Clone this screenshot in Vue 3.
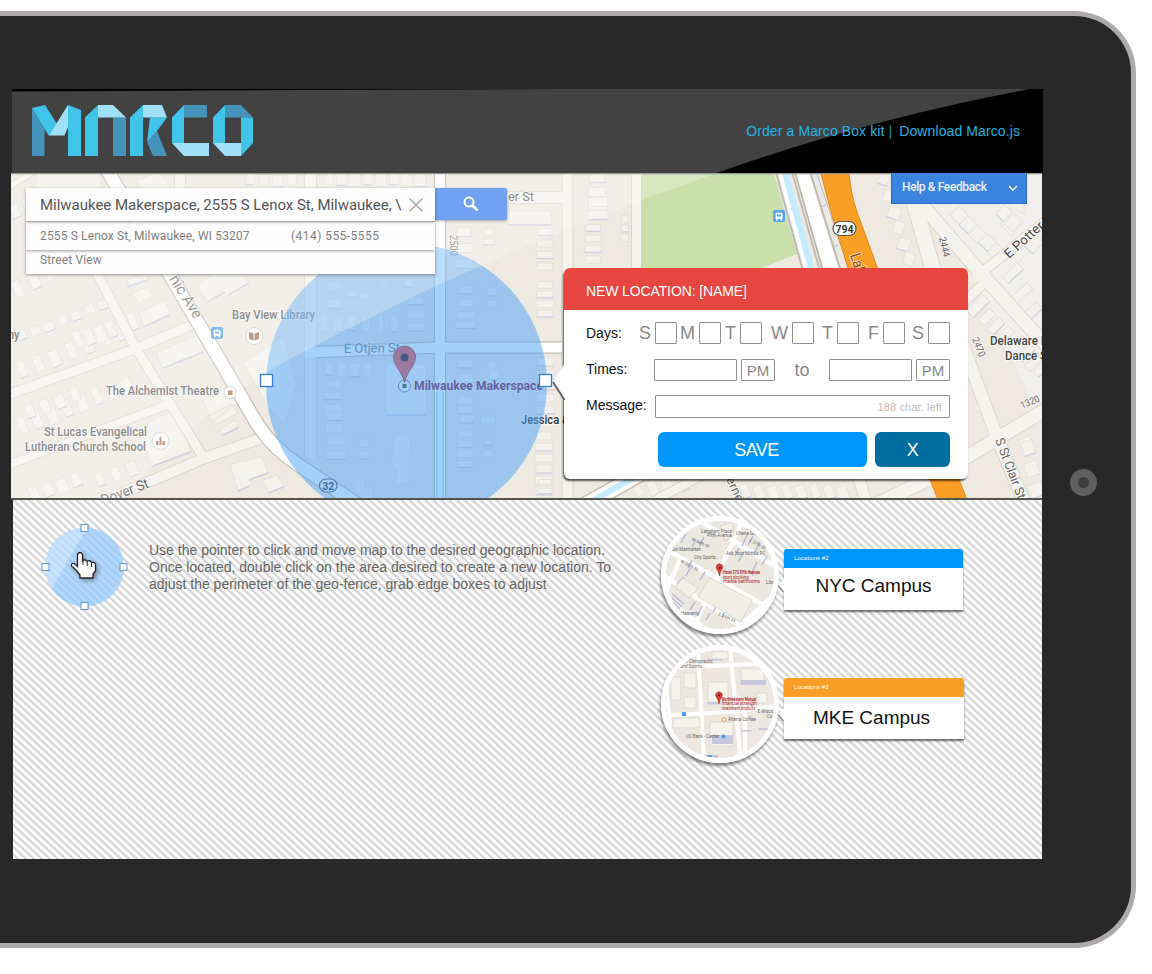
<script setup>
const days = ['S', 'M', 'T', 'W', 'T', 'F', 'S']

const help = ['Use the pointer to click and move map to the desired geographic location.',
  'Once located, double click on the area desired to create a new location. To',
  'adjust the perimeter of the geo-fence, grab edge boxes to adjust']

// rows of houses: x, y, step x, step y, count, width, height, rotation
const rows = [
  [22, 370, 16.5, -6.4, 7, 9, 17, -22], [78, 340, 11, -3.5, 6, 9, 17, -22],
  [22, 336, 13.5, -5.2, 7, 10, 9, -22], [22, 426, 15, -5.8, 8, 9, 17, -22],
  [30, 412, 15, -5.8, 4, 9, 14, -22], [34, 494, 14, -4.6, 4, 10, 14, -22],
  [100, 480, 16, -6, 3, 9, 14, -22], [18, 290, 16, -10, 3, 10, 18, -25],
  [15, 212, 13, -8, 2, 10, 14, -25],
  [329, 179, 13, 0, 8, 10, 13, 0], [250, 180, 14, 0, 4, 9, 11, 0],
  [324, 324, 14, 0, 2, 9, 15, 0], [352, 324, 14, 0, 2, 9, 15, 0], [381, 324, 13, -1, 2, 7, 18, 0],
  [416, 301, 0, 13, 3, 17, 8, 0], [334, 286, 0, 18, 2, 17, 9, 0],
  [352, 295, 13, 1, 2, 12, 7, 0], [384, 283, 25, 0, 2, 9, 9, 0],
  [329, 369, 13, 0, 4, 9, 14, 0], [333, 384, 0, 12, 3, 17, 7, 0],
  [334, 416, 0, 12, 3, 17, 9, 0], [336, 440, 0, 15, 2, 20, 9, 0],
  [464, 232, 0, 16, 3, 16, 9, 0], [489, 232, 0, 10, 2, 12, 6, 0],
  [466, 290, 0, 13, 2, 16, 8, 0], [466, 315, 0, 10, 2, 20, 7, 0],
  [545, 232, 0, 11.5, 4, 16, 7, 0], [545, 285, 0, 9.5, 4, 17, 7, 0],
  [545, 362, 0, 12, 5, 18, 8, 0], [544, 436, 0, 11, 6, 17, 8, 0],
  [465, 364, 0, 14, 2, 16, 8, 0], [465, 400, 0, 10, 2, 16, 8, 0],
  [467, 420, 21, 0, 2, 15, 8, 0], [465, 434, 0, 10, 4, 16, 7, 0],
  [488, 443, 0, 10, 2, 9, 6, 0], [364, 443, 0, 12, 2, 11, 8, 0],
  [492, 292, 0, 12, 2, 10, 8, 0], [492, 367, 2, 8, 2, 9, 10, 0],
  [597, 178, 0, 14, 3, 17, 9, 0], [598, 202, 0, 13, 2, 20, 9, 0], [593, 228, 0, 10.5, 4, 16, 7, 0],
  [625, 219, 0, 9.5, 3, 7, 7, 0],
  [884, 180, 5, 16, 8, 11, 12, 17],
  [959, 216, 9.5, 9, 5, 14, 13, 43], [1004, 214, 9, 9, 2, 12, 13, 43],
  [1020, 254, 14, -10, 2, 12, 16, 43], [978, 306, 0, 0, 1, 24, 10, -45],
  [987, 318, 9, 8, 3, 17, 9, -45], [1013, 274, 9, 19, 3, 22, 9, -43],
  [1018, 345, 8, 8, 4, 18, 8, -43], [1028, 449, 4, 20, 3, 13, 14, -20],
  [638, 490, 15, -2, 4, 9, 15, -25], [745, 492, 14, 0, 8, 9, 14, -22], [545, 482, 0, 9, 3, 14, 5, 0]
]

const houses = rows.flatMap(([x, y, dx, dy, n, w, h, r], k) =>
  Array.from({ length: n }, (_, i) => {
    const v = ((i * 7 + k * 5) % 5) - 2
    return { x: x + dx * i, y: y + dy * i + (dx ? v * 0.5 : 0), w: w + v * 0.6, h, r, shade: (i + k) % 2 === 0 }
  })
)

const roads = [
  ['M75 236L99 277L135 347L205 460', 9], ['M5 396L135 349L199 322', 9],
  ['M5 466L172 403', 8], ['M85 509L205 458L270 435', 10], ['M5 190Q20 180 40 168', 5],
  ['M180 165V190', 10], ['M310.500 165V458', 11], ['M567.500 165V505', 10],
  ['M446 197.500H567', 11], ['M636.500 165V275', 9],
  ['M912 195L936 280', 15], ['M918 200L985 278L1050 350', 13], ['M975 278L1048 219', 9],
  ['M955 310L990 278', 9],
  ['M950 310L998 440L1028 510', 12], ['M955 464L1000 437L1050 407', 13],
  ['M860 512L940 474', 13], ['M858 474L868 510', 11], ['M655 500L705 474', 8]
]

const labels = [
  { t: 'nic Ave', x: 169, y: 279, w: 48, r: 58, s: 15, c: '#777' },
  { t: 'Dover St', x: 103, y: 505, w: 50, r: -21, s: 14, c: '#666' },
  { t: 'E Otjen St', x: 344, y: 353, w: 56, r: -1, s: 13, c: '#777' },
  { t: 'er St', x: 508, y: 201, w: 26, r: 0, s: 13, c: '#666' },
  { t: '2500', x: 450, y: 235, w: 21, r: 90, s: 10, c: '#777' },
  { t: '2444', x: 939, y: 238, w: 20, r: 77, s: 10, c: '#555' },
  { t: '2470', x: 972, y: 339, w: 20, r: 68, s: 10, c: '#666' },
  { t: '1320', x: 1022, y: 409, w: 20, r: -23, s: 10, c: '#666' },
  { t: 'E Potter A', x: 1009, y: 259, w: 60, r: -42, s: 13, c: '#444' },
  { t: 'S St Clair St', x: 995, y: 440, w: 64, r: 69, s: 13, c: '#666' },
  { t: 'erne', x: 726, y: 479, w: 26, r: 65, s: 12, c: '#666' },
  { t: 'Lake', x: 850, y: 255, w: 28, r: 73, s: 15, c: '#8a4b10' },
  { t: 'Bay View Library', x: 232, y: 319, w: 83, r: 0, s: 12, c: '#666', b: 1 },
  { t: 'The Alchemist Theatre', x: 106, y: 395, w: 113, r: 0, s: 12, c: '#666', b: 1 },
  { t: 'St Lucas Evangelical', x: 44, y: 435.5, w: 103, r: 0, s: 12, c: '#666', b: 1 },
  { t: 'Lutheran Church School', x: 25, y: 450.5, w: 121, r: 0, s: 12, c: '#666', b: 1 },
  { t: 'ny', x: 8, y: 339, w: 11.500, r: 0, s: 12, c: '#555', b: 1 },
  { t: 'Jessica &', x: 521, y: 424, w: 48, r: 0, s: 12, c: '#333', b: 1 },
  { t: 'Delaware H', x: 990, y: 345, w: 59, r: 0, s: 12, c: '#444', b: 1 },
  { t: 'Dance S', x: 1005, y: 360, w: 42, r: 0, s: 12, c: '#444', b: 1 }
]

const campuses = [
  { id: 'nyc', name: 'NYC Campus', tag: 'Locations #2' },
  { id: 'mke', name: 'MKE Campus', tag: 'Locations #2' }
]
</script>

<template>
  <div class="stage">
    <div class="tablet">
      <div class="screen">
        <header class="top">
          <svg class="glare" viewBox="12 89 1031 84" width="1031" height="84">
            <path d="M12 91.500L300 90L560 89H1030Q865 120 717 173H12Z" fill="#424242" />
          </svg>
          <svg class="logo" viewBox="0 0 221 51" width="221" height="51">
            <g fill="#4593bb">
              <path d="M0 3L12.500 24V51H0ZM81 12.500H94V51H81ZM125 26L135 51H121L115 37ZM152 0H175V12.500H152ZM193 0H209L221 12.500H193Z" />
            </g>
            <g fill="#41c4ea">
              <path d="M0 3L13 0L25 19L17 31L12.500 24ZM36 0L49 5V51H36ZM53 12.500L66 0V51H53ZM98 12.500L111 0V51H98ZM118 12.500H135L125 26L115 37ZM140 12.500L152 0V38H140ZM181 12.500L193 0V38H181ZM209 12.500H221V38L209 51Z" />
            </g>
            <g fill="#a0e0fa">
              <path d="M36 0V22L32.500 30.500H17ZM66 0H81L94 12.500H66ZM111 0H130L135 12.500H111ZM140 38H177V51H152ZM181 38H209V51H193Z" />
            </g>
          </svg>
          <nav class="links"><a>Order a Marco Box kit</a><span class="bar">|</span><a>Download Marco.js</a></nav>
        </header>

        <section class="map">
          <svg class="canvas" viewBox="11 173 1031 327" width="1031" height="327">
            <rect x="11" y="173" width="1031" height="327" fill="#eee9e1" />
            <path d="M1042 173V420L968 268L905 173Z" fill="#f2f0ec" />
            <g fill="#f4f2ec" stroke="#e5e2db" stroke-width="1">
              <path d="M37 173H99L102 188H34ZM137 180L160 172L172 190H140Z" />
              <path d="M197 285L228 262L249 283L228 296L221 290L208 302ZM139 313L165 300L170 314L144 326ZM131 294L147 287L153 296L139 303ZM127 280L148 273V280L130 287Z" />
              <path d="M156 353L198 335L204 351L163 368ZM243 363L283 337L297 384L292 401L285 424L270 410ZM138 428L175 409L191 451L152 466Z" />
              <path d="M203 400L230 386L238 402L212 422ZM209 416L232 404L238 413L214 425ZM220 430L235 420L238 427L224 435Z" />
              <path d="M230 464L262 457L268 473L249 480L252 485L238 491ZM263 480L277 475L285 486L269 493Z" />
              <path d="M386 364H426V415H386ZM394 438L402 433L410 437L409 483L396 485V470L391 462ZM355 479H365V488H373V500H355Z" />
              <path d="M508 211H551V225H508ZM1000 214L1007 206L1024 222L1011 236L1002 226ZM978 185L984 178L1024 202V214Z" />
              <path d="M973 407L983 398L991 404L980 413ZM1018 441L1029 436L1037 446L1024 453Z" />
            </g>
            <g stroke="#cfcfe2" stroke-width="1.400" fill="none">
              <path d="M208 302L225 292M228 295L249 283M144 327L170 315M163 368L204 352M127 287L148 280M153 466L191 452M249 480L268 473M269 493L285 486M223 435L238 428M508 225H551M386 415H426M238 491L249 486" />
            </g>
            <g v-for="(h, i) in houses" :key="i" :transform="`translate(${h.x} ${h.y}) rotate(${h.r})`">
              <rect :x="-h.w / 2" :y="-h.h / 2" :width="h.w" :height="h.h" fill="#f4f2ed" stroke="#e5e2dd" stroke-width="1" />
              <path v-if="h.shade" :d="`M${-h.w / 2} ${h.h / 2}H${h.w / 2}`" stroke="#cfcfe2" stroke-width="1.300" />
            </g>
            <g fill="none" stroke="#ddd8cc">
              <path v-for="r in roads" :key="r[0]" :d="r[0]" :stroke-width="r[1] + 2" />
            </g>
            <g fill="none" stroke="#f5f3ee">
              <path v-for="r in roads" :key="r[0]" :d="r[0]" :stroke-width="r[1]" />
            </g>
            <path class="case" d="M104 165L170 275L256 422Q272 448 300 466L360 506" stroke-width="15" />
            <path class="case" d="M316 352L440 347.500H562" stroke-width="12.500" />
            <path class="case" d="M440 165V505" stroke-width="12.500" />
            <path class="main" d="M104 165L170 275L256 422Q272 448 300 466L360 506" stroke-width="12.500" />
            <path class="main" d="M305 352.500L440 347.500H562" stroke-width="10" />
            <path class="main" d="M440 165V505" stroke-width="10" />
            <path class="water" d="M437 392V500M443 392V500" stroke-width="2" />

            <path d="M641 173H774L797 254L762 268V275H641Z" fill="#cae0ab" />
            <path d="M774 165L804 275H864L834 165Z" fill="#ece9e4" />
            <path d="M781 165L812 278" stroke="#fff" stroke-width="10" />
            <path class="water" d="M783 165L814 278" stroke-width="6.500" />
            <path d="M799 165L834 278" stroke="#fff" stroke-width="14" />
            <path d="M774 165L804 275M790 165L822 278M793 165L825 278M808 165L843 278" fill="none" stroke="#bdb8ad" stroke-width="1.800" />
            <path d="M814 165L852 278M818 165L846 252M821 207L826 205M833 247L838 245" fill="none" stroke="#bbb" stroke-width="1" />
            <path d="M821 173H849Q851 195 857 212L880 275L967 500H938L848 268Q831 215 821 173Z" fill="#fb9e25" stroke="#e08a17" stroke-width="1" />
            <path d="M578 509L640 474" stroke="#c5c1b5" stroke-width="17" /><path d="M578 509L640 474" stroke="#fff" stroke-width="14" />
            <path class="water" d="M578 509L640 474" stroke-width="6" />

            <g v-for="l in labels" :key="l.t" :transform="`translate(${l.x} ${l.y}) rotate(${l.r})`">
              <text class="label" :class="{ poi: l.b }" :font-size="l.s" :fill="l.c" :textLength="l.w" lengthAdjust="spacingAndGlyphs">{{ l.t }}</text>
            </g>
            <rect x="833" y="221.500" width="23" height="14" rx="7" fill="#fff" stroke="#555" stroke-width="1.200" />
            <text class="shield" x="844.500" y="232.500">794</text>
            <g fill="#fff" stroke="#d2cdc5"><circle cx="254" cy="336" r="8.500" /><circle cx="230" cy="392.500" r="6" /><circle cx="160.500" cy="441" r="8.500" /></g>
            <g fill="#ad7c5e">
              <path d="M249 332L253.500 333.500V340.500L249 339ZM259 332L254.500 333.500V340.500L259 339ZM228 390.500H232.500V395H228ZM156 441H158.500V445H156ZM159.500 438L160.500 436L161.500 438V445H159.500ZM162.500 441H165V445H162.500Z" />
            </g>
            <g v-for="p in [[211, 327], [773, 210]]" :key="p[0]" :transform="`translate(${p[0]} ${p[1]})`">
              <rect width="12" height="12" rx="2" fill="#5aa5ef" />
              <path d="M2.500 3.500Q6 1.500 9.500 3.500V9H2.500ZM3 9H4.500V10.500H3ZM7.500 9H9V10.500H7.500Z" fill="#fff" /><path d="M4 4.500H8V6.500H4Z" fill="#5aa5ef" />
            </g>
            <circle cx="404.500" cy="386" r="6" fill="#fff" stroke="#777" /><path d="M402.500 384H406.500V388H402.500Z" fill="#553" />
            <text class="place" x="414" y="390" textLength="129" lengthAdjust="spacingAndGlyphs">Milwaukee Makerspace</text>
            <path d="M404.500 383C403 372 393.500 366 393.500 357A11 11 0 0 1 415.500 357C415.500 366 406 372 404.500 383Z" fill="#ed5048" stroke="#b23a40" />
            <circle cx="404.500" cy="357.500" r="4" fill="#3c1016" />
            <rect x="319.500" y="479" width="17.500" height="13" rx="6.500" fill="#fff" stroke="#555" stroke-width="1.200" />
            <text class="shield" x="328.300" y="489.500">32</text>
            <circle cx="406.500" cy="384" r="140.500" fill="rgba(73,161,250,.5)" />
            <path d="M11 173H717Q480 255 275 367Q140 450 11 640Z" fill="#fff" opacity=".25" />
            <path d="M11 173.500H1042" stroke="#9b9894" stroke-width="1.500" />
            <path d="M11 499H1042" stroke="#55534f" stroke-width="2" />
            <g fill="#fff" stroke="#347dcb" stroke-width="1.300"><rect x="260.500" y="374.500" width="12" height="12" /><rect x="539.500" y="374.500" width="12" height="12" /></g>
          </svg>

          <div class="search">
            <div class="query">
              <span class="place-name">Milwaukee Makerspace, 2555 S Lenox St, Milwaukee, \</span>
              <svg class="clear" width="16" height="16" viewBox="0 0 16 16"><path d="M1.500 1.500L14.500 14.500M14.500 1.500L1.500 14.500" stroke="#aaa" stroke-width="1.500" /></svg>
            </div>
            <div class="detail"><span class="address">2555 S Lenox St, Milwaukee, WI 53207</span><span class="phone">(414) 555-5555</span></div>
            <div class="street">Street View</div>
          </div>
          <button class="go" aria-label="Search">
            <svg width="16" height="16" viewBox="0 0 16 16" fill="none" stroke="#fff"><circle cx="6" cy="6" r="4.500" stroke-width="2" /><path d="M9.500 9.500L14.500 14.500" stroke-width="2.500" /></svg>
          </button>
          <div class="feedback">
            <span>Help &amp; Feedback</span>
            <svg width="10" height="7" viewBox="0 0 10 7"><path d="M1 1L5 5L9 1" fill="none" stroke="#fff" stroke-width="1.600" /></svg>
          </div>

          <div class="popup">
            <svg class="arrow" width="15" height="42" viewBox="0 0 15 42"><path d="M15 1L3 20L15 40" fill="#fff" /><path d="M3 20L14.500 38" stroke="#666" stroke-width="2" /></svg>
            <h2>NEW LOCATION: [NAME]</h2>
            <form class="form">
              <div class="line"><label>Days:</label>
                <div class="days"><span v-for="(d, i) in days" :key="i" class="day">{{ d }}<i class="tick"></i></span></div>
              </div>
              <div class="line times"><label>Times:</label>
                <i class="time"></i><span class="pm">PM</span><span class="to">to</span><i class="time"></i><span class="pm">PM</span>
              </div>
              <div class="line message"><label>Message:</label><div class="msg">188 char. left</div></div>
              <div class="line actions"><span class="save">SAVE</span><span class="close">X</span></div>
            </form>
          </div>
        </section>

        <section class="lower">
          <div class="howto">
            <svg class="pointer" width="87" height="87" viewBox="41 523 87 87">
              <circle cx="84.500" cy="567" r="39.500" fill="#8cc5ff" opacity=".68" />
              <path d="M88 527.700Q70 555 52 589A39.500 39.500 0 0 1 88 527.700Z" fill="#fff" opacity=".3" />
              <g fill="#fff" stroke="#5f93d6" stroke-width="1"><rect x="81" y="524.500" width="7" height="7" /><rect x="42" y="563.500" width="7" height="7" /><rect x="120" y="563.500" width="7" height="7" /><rect x="81" y="602.500" width="7" height="7" /></g>
              <path class="hand" d="M77.500 554Q80 551 82.500 554V561Q85 558.500 87 561.500Q90 559.500 91.500 562.500Q95 561.500 95.500 564.500V571L93 574V578H80V575L76.500 570.500L71.500 566Q71 562.500 74.500 563.500L77.500 566.500Z" />
              <path d="M83 561V565M87.300 562V566M91.500 563V567" stroke="#333" stroke-width="1" />
            </svg>
            <p><span v-for="h in help" :key="h">{{ h }}</span></p>
          </div>
          <div class="campuses">
            <article v-for="c in campuses" :key="c.id" class="campus" :class="c.id">
              <div class="disc">
                <svg v-if="c.id === 'nyc'" width="108" height="108" viewBox="666 521 108 108">
                  <rect x="666" y="521" width="108" height="108" fill="#ebe8df" />
                  <path d="M660 546L790 620M690 515L790 575M655 570L770 645M690 635L745 515M655 615L680 560M725 640L790 580M655 590L720 640" stroke="#fff" stroke-width="4.500" />
                  <g stroke="#b9b9d8" stroke-width="1.500"><path d="M681 543L687 531M692 547L696 540M704 537L699 547M742 546L747 535M755 552L760 542M738 562L744 552M752 572L757 562M688 568L692 560M700 580L705 572M677 584L684 577M672 594L684 604M690 610L695 602M706 620L710 613M722 617L726 607M748 570L753 575M762 565L767 556M727 540L733 531M672 598L682 607M673 602L680 609M697 616L702 606M713 612L718 603M735 556L739 548M748 545L753 536M686 576L690 568" /></g>
                  <g fill="#f2f0e6" stroke="#d3d0c3" stroke-width=".8"><path d="M710 578L752 600L741 622L698 597ZM720 526L732 522L734 535L725 541ZM683 578L698 588L689 598L675 587Z" /></g>
                  <g class="tiny"><text x="701" y="533">Langham Place</text><text x="707" y="537">Fifth Avenue</text><text x="736" y="535">Cherie Grove</text><text x="672" y="551">Sin Manhattan</text><text x="694" y="559">City Sports</text><text x="726" y="555">Ask Your Middle PC</text><text x="766" y="584">Libro</text><text x="681" y="615">Heavenly</text>
                    <text transform="translate(691 540) rotate(25)">W 38th St</text><text transform="translate(680 562) rotate(28)">W 36th St</text><text transform="translate(749 541) rotate(30)">E 37th St</text><text transform="translate(718 615) rotate(25)">E 34th St</text></g>
                  <g class="hot"><text class="strong" x="723" y="574" textLength="37" lengthAdjust="spacingAndGlyphs">Hotel 373 Fifth Avenue</text><text x="723" y="578.500">spot docking</text><text x="723" y="583">marble bathrooms</text></g>
                  <path d="M719.500 576Q719 572 716.800 569A3.300 3.300 0 1 1 722.200 569Q720 572 719.500 576Z" fill="#e53935" stroke="#a32323" stroke-width=".5" /><circle cx="719.500" cy="567.500" r="1.100" fill="#411" />
                </svg>
                <svg v-else width="108" height="108" viewBox="666 652 108 108">
                  <rect x="666" y="652" width="108" height="108" fill="#ece8e0" />
                  <path d="M698 650L704 765M730 650L741 765M664 718L740 713L777 708M664 670L777 665M666 687L674 765M745 700V765" stroke="#fff" stroke-width="4" fill="none" />
                  <g fill="#f5f3ec" stroke="#dddacf"><path d="M671 679H681V702H671ZM684 675H696V690H684ZM684 699H696V710H684ZM708 684H728V704H708ZM712 654H728V661H712ZM741 671H764V686H741ZM673 720H700V730H673ZM710 724H733V748H710ZM757 695H767V705H757Z" /></g>
                  <g fill="#c8c7dd"><path d="M741 682H766V687H741ZM707 704H721V706.500H707ZM712 737H733V746H712ZM710 661H722V662.500H710ZM705 757H718V760H705ZM741 732H752V733.500H741ZM759 730H768V732H759Z" /></g>
                  <g class="tiny"><text x="682" y="665">On Chiropractic</text><text x="680" y="669.500">and Sports...</text><text x="728" y="723">Alterra Coffee</text><text x="686" y="740">US Bank - Center</text><text x="757.500" y="714.500">E Wiscon</text><text x="767" y="720">Court</text></g>
                  <g class="hot"><text class="strong" x="722" y="702.500" textLength="34" lengthAdjust="spacingAndGlyphs">Northwestern Mutual</text><text x="722" y="707">financial strength</text><text x="722" y="711.500" textLength="33" lengthAdjust="spacingAndGlyphs">investment products</text></g>
                  <g fill="#4c9be9"><path d="M682 714H686V718H682ZM707 757H712V761H707Z" /><circle cx="723.500" cy="738.500" r="2" /></g><circle cx="724" cy="721.500" r="2" fill="#fff" stroke="#ee8b3f" />
                  <path d="M719 706Q718.500 702 716.300 699A3.300 3.300 0 1 1 721.700 699Q719.500 702 719 706Z" fill="#e53935" stroke="#a32323" stroke-width=".5" /><circle cx="719" cy="697.300" r="1.100" fill="#411" />
                </svg>
              </div>
              <div class="card">
                <svg class="nib" width="7" height="16" viewBox="0 0 7 16"><path d="M7 0L1 6L7 13Z" fill="#fff" /><path d="M1 6.500L6.500 13" stroke="#888" stroke-width="1.500" /></svg>
                <div class="tag">{{ c.tag }}</div>
                <div class="name">{{ c.name }}</div>
              </div>
            </article>
          </div>
        </section>
      </div>
      <div class="home"></div>
    </div>
  </div>
</template>

<style>
body { background: #fff; overflow: hidden; }
</style>

<style scoped>
.stage { width: 1152px; height: 974px; box-sizing: border-box; padding-top: 11px; overflow: hidden; font-family: "Liberation Sans", Arial, sans-serif; }
.tablet { width: 1136px; height: 937px; box-sizing: border-box; border: 5px solid #adaaa9; border-left: 0; border-radius: 0 62px 62px 0; background: #282828; display: flex; align-items: flex-start; }
.screen { width: 1032px; margin: 73px 0 0 11px; }
.home { box-sizing: border-box; width: 27px; height: 27px; border: 8px solid #606060; border-radius: 50%; background: #3c3c3c; margin: 453px 0 0 27px; }

.top { position: relative; height: 84px; margin-left: 1px; background: #000; display: flex; justify-content: space-between; align-items: flex-start; }
.glare { position: absolute; left: 0; top: 0; }
.logo { position: relative; margin: 16px 0 0 20px; }
.links { position: relative; display: flex; margin: 34px 23px 0 0; font-size: 14px; line-height: 17px; letter-spacing: .1px; color: #22b4e2; white-space: nowrap; }
.bar { margin: 0 7px 0 4px; color: #1795b8; }

.map { position: relative; width: 1031px; height: 327px; }
.canvas { display: block; }
.canvas .case { fill: none; stroke: #c4bfb1; }
.canvas .main { fill: none; stroke: #fff; }
.canvas .water { fill: none; stroke: #c3ebfd; }
.label { font-family: Roboto, sans-serif; paint-order: stroke; stroke: rgba(255,255,255,.6); stroke-width: 2px; }
.poi { font-weight: 500; }
.shield { font-family: Roboto, sans-serif; font-weight: 700; font-size: 10.5px; text-anchor: middle; fill: #333; }
.place { font-family: Roboto, sans-serif; font-weight: 700; font-size: 13px; fill: #801b3e; paint-order: stroke; stroke: rgba(255,255,255,.35); stroke-width: 2px; }

.search { position: absolute; left: 15px; top: 15px; width: 409px; font-family: Roboto, sans-serif; color: #808080; }
.search > div { box-sizing: border-box; background: #fefefe; box-shadow: 0 1px 3px rgba(0,0,0,.4); }
.query { position: relative; z-index: 2; height: 33px; display: flex; align-items: center; justify-content: space-between; padding: 0 11px 0 14px; }
.place-name { font-size: 15px; letter-spacing: -.02px; color: #555; white-space: nowrap; }
.detail { position: relative; z-index: 1; height: 28px; margin-top: 1px; padding: 0 0 1px 14px; display: flex; align-items: center; font-size: 12px; white-space: nowrap; }
.address { width: 251px; letter-spacing: .14px; }
.phone { letter-spacing: .45px; }
.street { height: 24px; padding: 3px 0 0 14px; font-size: 12px; line-height: 15px; letter-spacing: .12px; }
.go { position: absolute; left: 423px; top: 15px; width: 73px; height: 32px; border: 0; border-left: 1px solid #5782d6; border-radius: 0 2px 2px 0; background: #71a1f3; display: flex; align-items: center; justify-content: center; box-shadow: 0 1px 3px rgba(0,0,0,.35); }
.feedback { position: absolute; left: 880px; top: 0; width: 136px; height: 31px; box-sizing: border-box; border: 1px solid #2b69c4; border-top: 0; background: #3a84e0; color: #e8f0fb; font: 500 12px/28px Roboto, sans-serif; letter-spacing: -.38px; display: flex; justify-content: space-between; padding: 0 8px 0 10px; white-space: nowrap; }
.feedback svg { margin-top: 12px; }

.popup { position: absolute; left: 553px; top: 95px; width: 404px; height: 211px; background: #fff; border-radius: 6px; box-shadow: -1px 2px 2px rgba(0,0,0,.65); }
.arrow { position: absolute; left: -14px; top: 94px; }
.popup h2 { margin: 0; height: 42px; background: #e7453f; border-radius: 6px 6px 0 0; padding-left: 22px; font-weight: 400; font-size: 14px; line-height: 46px; letter-spacing: -.12px; color: #fff; }
.form { padding: 12px 18px 0 22px; }
.line { display: flex; }
label { font-size: 14px; line-height: 22px; letter-spacing: 0; color: #111; }
.days { margin-left: auto; display: grid; grid-template-columns: 42px 44px 41px 52px 45px 46px 45px; }
.day { display: flex; justify-content: flex-end; gap: 4px; font-size: 18px; line-height: 23px; color: #888; }
.tick, .time, .pm, .msg { box-sizing: border-box; border: 1px solid #909090; border-radius: 1px; }
.tick { width: 22px; height: 22px; }
.times { margin-top: 14px; height: 22px; justify-content: flex-end; }
.times label { margin-right: auto; line-height: 20px; }
.time { width: 83px; }
.pm { width: 34px; margin-left: 4px; font-size: 15px; line-height: 22px; text-align: center; color: #888; }
.to { width: 54px; text-align: center; font-size: 18px; line-height: 23px; color: #888; }
.message { margin-top: 14px; height: 23px; }
.message label { width: 69px; line-height: 20px; }
.msg { flex: 1; text-align: right; padding-right: 7px; font-size: 11px; line-height: 22px; color: #bcbcbc; letter-spacing: .1px; }
.actions { margin-top: 14px; justify-content: flex-end; gap: 8px; }
.actions span { height: 35px; line-height: 37px; border-radius: 6px; text-align: center; color: #fff; font-size: 18px; letter-spacing: -.6px; }
.save { width: 209px; background: #0096fc; padding-right: 12px; box-sizing: border-box; }
.close { width: 75px; background: #006da1; }

.lower { margin-left: 2px; width: 1029px; height: 359px; display: flex; justify-content: space-between; background: repeating-linear-gradient(43deg, #fff 0, #fff 1.7px, #d6d6d6 3px, #d6d6d6 4px, #fff 5.4px); }
.howto { display: flex; align-items: flex-start; padding: 23px 0 0 28px; }
.howto p { margin: 19px 0 0 21px; font-size: 14px; line-height: 17px; color: #666; }
.howto p span { display: block; white-space: nowrap; }
.hand { fill: #fff; stroke: #222; stroke-width: 1.3; filter: drop-shadow(2px 2px 2px rgba(0,0,0,.35)); }
.campuses { width: 381px; padding-top: 16px; }
.campus { display: flex; align-items: flex-start; height: 129px; }
.disc { box-sizing: border-box; width: 118px; height: 118px; border: 5px solid #fff; border-radius: 50%; overflow: hidden; box-shadow: -1px 3px 3px rgba(0,0,0,.45); }
.disc svg { display: block; border-radius: 50%; }
.tiny { font-family: Roboto, sans-serif; font-size: 4.5px; fill: #666; }
.hot { font-family: Roboto, sans-serif; font-size: 4.5px; fill: #b2202d; }
.strong { font-weight: 700; }
.card { position: relative; width: 179px; height: 61px; margin: 33px 0 0 5px; background: #fff; border-radius: 3px 3px 0 0; box-shadow: 0 2px 2px rgba(0,0,0,.55); }
.mke .card { width: 180px; }
.nib { position: absolute; left: -7px; top: 30px; }
.tag { height: 19px; background: #0096fc; color: #fff; font-size: 6px; line-height: 18px; padding-left: 10px; border-radius: 3px 3px 0 0; letter-spacing: .05px; }
.mke .tag { background: #fb9e25; }
.name { text-align: center; font-size: 19px; line-height: 35px; color: #111; }
.mke .name { padding-right: 5px; line-height: 41px; }
</style>
